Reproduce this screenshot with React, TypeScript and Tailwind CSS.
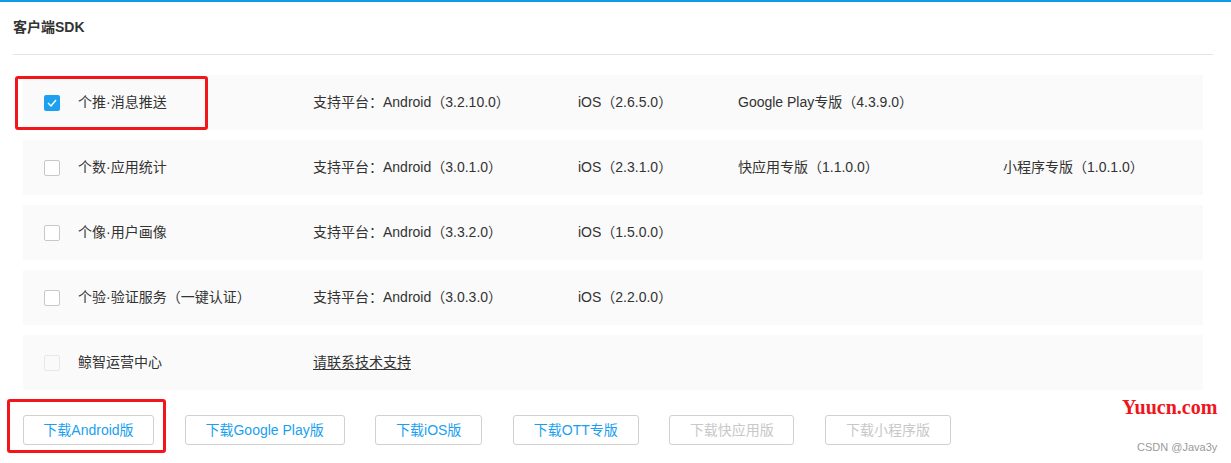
import React from "react";

type Row = {
  label: string;
  checked?: boolean;
  disabled?: boolean;
  cols: string[];
  link?: string;
};

const rows: Row[] = [
  {
    label: "个推·消息推送",
    checked: true,
    cols: ["支持平台：Android（3.2.10.0）", "iOS（2.6.5.0）", "Google Play专版（4.3.9.0）", ""],
  },
  {
    label: "个数·应用统计",
    cols: ["支持平台：Android（3.0.1.0）", "iOS（2.3.1.0）", "快应用专版（1.1.0.0）", "小程序专版（1.0.1.0）"],
  },
  { label: "个像·用户画像", cols: ["支持平台：Android（3.3.2.0）", "iOS（1.5.0.0）", "", ""] },
  { label: "个验·验证服务（一键认证）", cols: ["支持平台：Android（3.0.3.0）", "iOS（2.2.0.0）", "", ""] },
  { label: "鲸智运营中心", disabled: true, cols: [], link: "请联系技术支持" },
];

const buttons = [
  { text: "下载Android版", w: "w-[131px]" },
  { text: "下载Google Play版", w: "w-[160px]" },
  { text: "下载iOS版", w: "w-[107px]" },
  { text: "下载OTT专版", w: "w-[126px]" },
  { text: "下载快应用版", w: "w-[125px]", disabled: true },
  { text: "下载小程序版", w: "w-[126px]", disabled: true },
];

function Checkbox({ checked, disabled }: { checked?: boolean; disabled?: boolean }) {
  if (checked) {
    return (
      <span className="flex h-4 w-4 items-center justify-center rounded-[2px] bg-[#1ea0f0]">
        <svg width="10" height="8" viewBox="0 0 10 8" fill="none">
          <path d="M1 4l3 3 5-6" stroke="white" strokeWidth="1.4" />
        </svg>
      </span>
    );
  }
  return (
    <span
      className={
        disabled
          ? "block h-4 w-4 rounded-[2px] border border-[#e8e8e8] bg-[#fafafa]"
          : "block h-4 w-4 rounded-[2px] border border-[#c8c8c8] bg-white"
      }
    />
  );
}

export default function App() {
  return (
    <div
      className="relative h-[463px] w-[1231px] overflow-hidden bg-white text-[#333]"
      style={{ fontFamily: '"Liberation Sans", "Noto Sans CJK SC", sans-serif' }}
    >
      <div className="h-[2px] bg-[#0b9de6]" />
      <div className="flex h-[50px] items-center pl-[13px] text-[14px] font-bold text-[#333]">客户端SDK</div>
      <div className="ml-[13px] mr-[18px] mt-[2px] h-px bg-[#e3e3e3]" />

      <div className="ml-[23px] mt-[20px] flex w-[1180px] flex-col gap-[10px]">
        {rows.map((r) => (
          <div key={r.label} className="flex h-[55px] items-center bg-[#fafafa] pl-[21px] text-[14px]">
            <div className="flex w-[269px] items-center gap-[18px]">
              <Checkbox checked={r.checked} disabled={r.disabled} />
              <span>{r.label}</span>
            </div>
            {r.link ? (
              <span className="underline underline-offset-2">{r.link}</span>
            ) : (
              <>
                <span className="w-[265px]">{r.cols[0]}</span>
                <span className="w-[160px]">{r.cols[1]}</span>
                <span className="w-[265px]">{r.cols[2]}</span>
                <span>{r.cols[3]}</span>
              </>
            )}
          </div>
        ))}
      </div>

      <div className="ml-[23px] mt-[25px] flex gap-[30.6px]">
        {buttons.map((b) => (
          <div
            key={b.text}
            className={`flex h-[30px] items-center justify-center rounded-[3px] border border-[#d0d0d0] bg-white text-[14px] ${b.w} ${
              b.disabled ? "text-[#c8c8c8]" : "text-[#1a9ff0]"
            }`}
          >
            {b.text}
          </div>
        ))}
      </div>

      <div className="pointer-events-none absolute left-[15px] top-[76px] h-[54px] w-[193px] rounded-[3px] border-[3px] border-[#f2161b]" />
      <div className="pointer-events-none absolute left-[7px] top-[399px] h-[54px] w-[159px] rounded-[3px] border-[3px] border-[#f2161b]" />

      <div
        className="absolute left-[1122px] top-[397px] text-[20px] font-bold leading-none text-[#f0141e]"
        style={{ fontFamily: '"Liberation Serif", serif' }}
      >
        Yuucn.com
      </div>
      <div className="absolute left-[1137px] top-[440px] text-[11px] leading-[14px] text-[#9a9a9a]">CSDN @Java3y</div>
    </div>
  );
}
